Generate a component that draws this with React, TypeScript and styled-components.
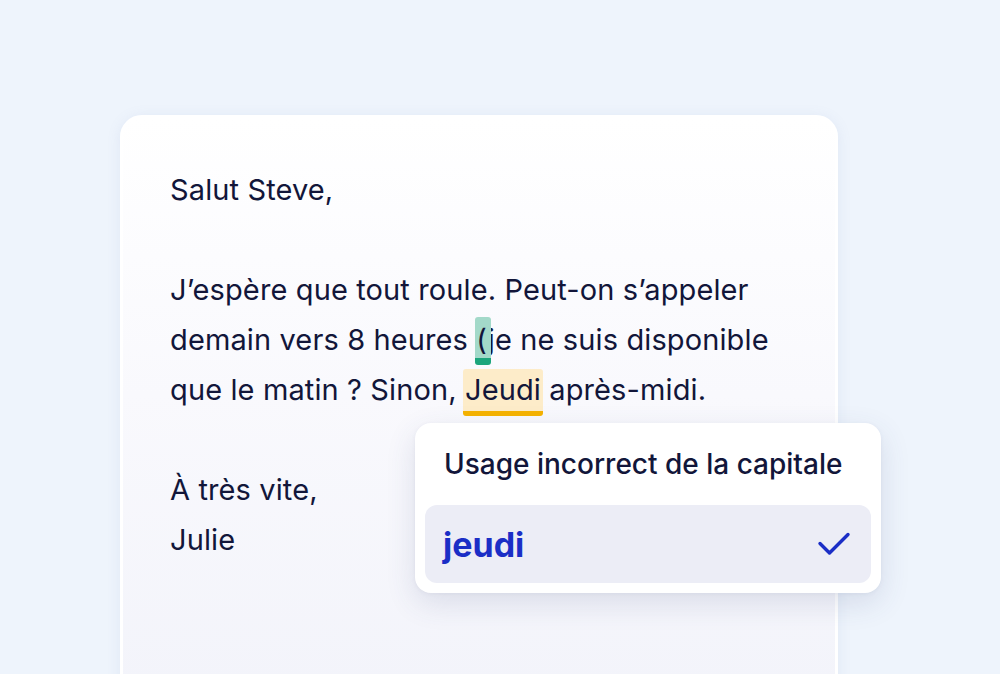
import styled, { createGlobalStyle } from 'styled-components';

const GlobalStyle = createGlobalStyle`
  html, body {
    margin: 0;
    padding: 0;
    background: #eef4fc;
    font-family: Inter, "Noto Sans", sans-serif;
    overflow: hidden;
  }
`

const Page = styled.div`
  width: 1000px;
  height: 674px;
  padding: 115px 0 0 120px;
  box-sizing: border-box;
  background: #eef4fc;
`

const Card = styled.div`
  position: relative;
  width: 718px;
  height: 620px;
  box-sizing: border-box;
  padding: 47px 0 0 47px;
  border: 3px solid #ffffff;
  border-radius: 22px;
  background: linear-gradient(180deg, #ffffff 0%, #f9f9fd 45%, #f2f3fa 100%);
  box-shadow: 0 2px 14px rgba(120, 140, 190, 0.12);
`

const Letter = styled.div`
  font-size: 29px;
  line-height: 50px;
  letter-spacing: 0.12px;
  color: #12163a;
`

const Line = styled.div`
  height: 50px;
  white-space: nowrap;
`

// highlight boxes sit behind the marked word
const CursorMark = styled.span`
  position: relative;
  z-index: 0;
  &::before {
    content: '';
    position: absolute;
    left: -1px;
    right: -3px;
    top: -5px;
    bottom: -8px;
    border-radius: 3px;
    background: #a3d9c9;
    border-bottom: 7px solid #1ca57c;
    z-index: -1;
  }
`

const CapMark = styled.span`
  position: relative;
  z-index: 0;
  &::before {
    content: '';
    position: absolute;
    left: -2px;
    right: -2px;
    top: -3px;
    bottom: -9px;
    border-radius: 3px;
    background: #fdecc9;
    border-bottom: 5px solid #f6b301;
    z-index: -1;
  }
`

const Popup = styled.div`
  position: absolute;
  left: 292px;
  top: 305px;
  width: 466px;
  box-sizing: border-box;
  padding: 0 10px 10px;
  background: #ffffff;
  border-radius: 16px;
  box-shadow: 0 10px 30px rgba(60, 70, 120, 0.14), 0 1px 4px rgba(60, 70, 120, 0.06);
`

const PopupTitle = styled.div`
  height: 82px;
  display: flex;
  align-items: center;
  padding-left: 19px;
  font-size: 28px;
  font-weight: 500;
  color: #12163a;
  white-space: nowrap;
`

const Suggestion = styled.div`
  height: 78px;
  display: flex;
  align-items: center;
  justify-content: space-between;
  padding: 0 20px 0 18px;
  border-radius: 12px;
  background: #ecedf6;
`

const SuggestionWord = styled.span`
  font-size: 34px;
  font-weight: 700;
  color: #1b2ec6;
`

const CheckIcon = () => (
  <svg width="34" height="28" viewBox="0 0 34 28" fill="none">
    <path d="M3 13.5 L12.5 23 L31 4.5" stroke="#1b2ec6" strokeWidth="3.4" strokeLinecap="round" strokeLinejoin="round" />
  </svg>
)

const App = (): JSX.Element => {
  return (
    <>
      <GlobalStyle />
      <Page>
        <Card>
          <Letter>
            <Line>Salut Steve,</Line>
            <Line />
            <Line>J’espère que tout roule. Peut-on s’appeler</Line>
            <Line>
              demain vers 8 heures <CursorMark>(</CursorMark>je ne suis disponible
            </Line>
            <Line>
              que le matin ? Sinon, <CapMark>Jeudi</CapMark> après-midi.
            </Line>
            <Line />
            <Line>À très vite,</Line>
            <Line>Julie</Line>
          </Letter>
          <Popup>
            <PopupTitle>Usage incorrect de la capitale</PopupTitle>
            <Suggestion>
              <SuggestionWord>jeudi</SuggestionWord>
              <CheckIcon />
            </Suggestion>
          </Popup>
        </Card>
      </Page>
    </>
  )
}

export default App;
